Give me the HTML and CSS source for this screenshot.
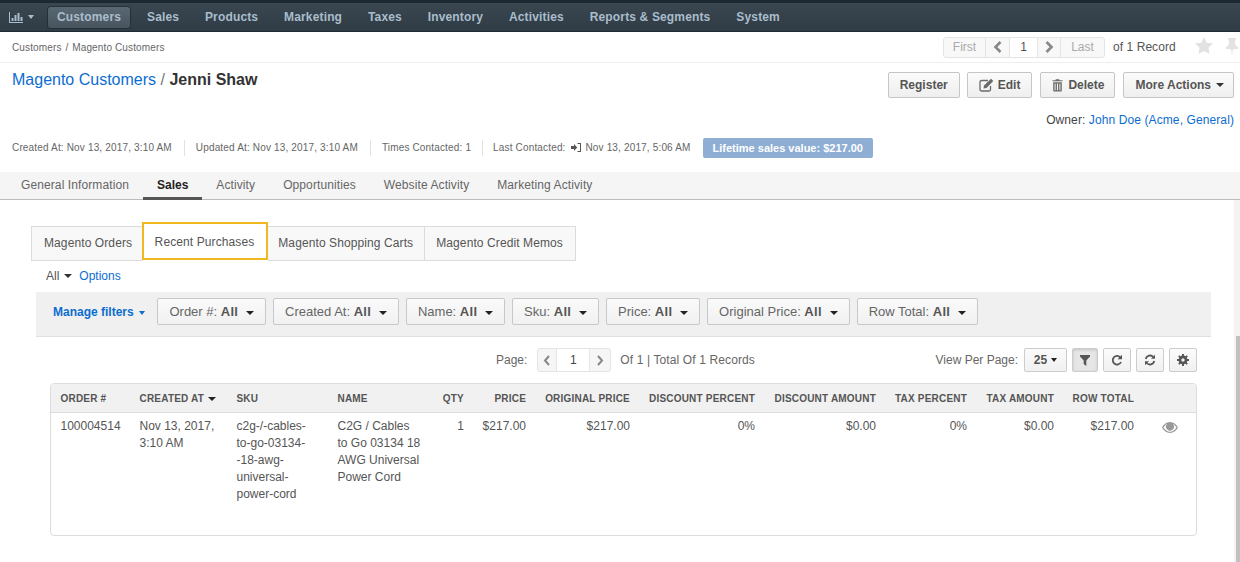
FILE: index.html
```html
<!DOCTYPE html>
<html lang="en">
<head>
<meta charset="utf-8">
<title>Jenni Shaw - Magento Customers</title>
<link rel="stylesheet" href="styles.css">
</head>
<body>
<div class="scrollbar"><div class="scrollbar-thumb"></div></div>
<header class="topnav">
  <div class="nav-logo">
    <svg class="nav-chart" width="14" height="11" viewBox="0 0 14 11"><path d="M0 0h1v10h13v1H0zM2.500 6h2v3h-2zM5.500 3h2v6h-2zM8.500 1h2v8h-2zM11.500 5h2v4h-2z" fill="#a9bdcb"/></svg>
    <span class="caret caret-nav"></span>
  </div>
  <nav class="nav-items">
    <a class="nav-item active">Customers</a>
    <a class="nav-item">Sales</a>
    <a class="nav-item">Products</a>
    <a class="nav-item">Marketing</a>
    <a class="nav-item">Taxes</a>
    <a class="nav-item">Inventory</a>
    <a class="nav-item">Activities</a>
    <a class="nav-item">Reports &amp; Segments</a>
    <a class="nav-item">System</a>
  </nav>
</header>

<div class="crumb-row">
  <div class="breadcrumb">Customers <span class="sep">/</span> Magento Customers</div>
  <div class="pager-area">
    <div class="rec-pager">
      <span class="rp-cell rp-first">First</span>
      <span class="rp-cell rp-prev"><svg width="10" height="12" viewBox="0 0 10 12"><path d="M7.500 1 L2.500 6 L7.500 11" fill="none" stroke="#888" stroke-width="2.600"/></svg></span>
      <span class="rp-cell rp-num">1</span>
      <span class="rp-cell rp-next"><svg width="10" height="12" viewBox="0 0 10 12"><path d="M2.500 1 L7.500 6 L2.500 11" fill="none" stroke="#888" stroke-width="2.600"/></svg></span>
      <span class="rp-cell rp-last">Last</span>
    </div>
    <span class="rec-count">of 1 Record</span>
    <svg class="star" width="18" height="17" viewBox="0 0 18 17"><path d="M9 0l2.700 5.700 6.300.8-4.600 4.300 1.200 6.200L9 14l-5.600 3 1.200-6.200L0 6.500l6.300-.8z" fill="#e2e2e2"/></svg>
    <svg class="pin" width="12" height="17" viewBox="0 0 12 17"><path d="M2 0h8v1.500H9v5l3 3v1.500H7l-1 6-1-6H0V9.500l3-3v-5H2z" fill="#e2e2e2"/></svg>
  </div>
</div>

<section class="title-row">
  <h1 class="page-title"><a class="link">Magento Customers</a> <span class="title-sep">/</span> <strong>Jenni Shaw</strong></h1>
  <div class="actions">
    <button class="btn btn-register">Register</button>
    <button class="btn"><svg class="btn-ico" width="16" height="14" viewBox="0 0 16 14"><path d="M11.500 8v3.500a1.500 1.500 0 0 1-1.500 1.500H2.500A1.500 1.500 0 0 1 1 11.500V4a1.500 1.500 0 0 1 1.500-1.500H9" fill="none" stroke="#6a6a6a" stroke-width="1.300"/><path d="M5 7.500L12 .8l2.300 2.300-6.800 6.900-3 .6z" fill="#6a6a6a"/></svg>Edit</button>
    <button class="btn btn-delete"><svg class="btn-ico trash" width="11" height="14" viewBox="0 0 12 14"><path d="M4 1.700V.6h4v1.100h3.500v1.300H.5V1.700zM1.300 4h9.400v9a1 1 0 0 1-1 1H2.300a1 1 0 0 1-1-1zm1.500 1.300v7.400h1.100V5.300zm2.600 0v7.400h1.200V5.300zm2.700 0v7.400h1.100V5.300z" fill="#6a6a6a" fill-rule="evenodd"/></svg>Delete</button>
    <button class="btn btn-more">More Actions<span class="caret caret-btn"></span></button>
  </div>
</section>

<div class="owner-row">Owner: <a class="link">John Doe (Acme, General)</a></div>

<div class="meta-row">
  <span class="meta">Created At: Nov 13, 2017, 3:10 AM</span>
  <span class="meta">Updated At: Nov 13, 2017, 3:10 AM</span>
  <span class="meta">Times Contacted: 1</span>
  <span class="meta">Last Contacted: <svg class="signin" width="10" height="9" viewBox="0 0 10 9"><path d="M0 3h3V1l3.200 3.500L3 8V6H0zM6.500 0H10v9H6.500V8H9V1H6.500z" fill="#555"/></svg> Nov 13, 2017, 5:06 AM</span>
  <span class="lifetime">Lifetime sales value: $217.00</span>
</div>

<div class="tabs">
  <a class="tab">General Information</a>
  <a class="tab current">Sales</a>
  <a class="tab">Activity</a>
  <a class="tab">Opportunities</a>
  <a class="tab">Website Activity</a>
  <a class="tab">Marketing Activity</a>
</div>

<main class="content">
  <div class="subtabs">
    <a class="subtab first">Magento Orders</a>
    <a class="subtab focus">Recent Purchases</a>
    <a class="subtab third">Magento Shopping Carts</a>
    <a class="subtab fourth">Magento Credit Memos</a>
  </div>

  <div class="all-row">
    <span class="all">All<span class="caret caret-all"></span></span>
    <a class="link">Options</a>
  </div>

  <div class="filter-bar">
    <a class="manage">Manage filters<span class="caret caret-blue"></span></a>
    <button class="fbtn">Order #: <b>All</b><span class="caret caret-f"></span></button>
    <button class="fbtn">Created At: <b>All</b><span class="caret caret-f"></span></button>
    <button class="fbtn">Name: <b>All</b><span class="caret caret-f"></span></button>
    <button class="fbtn">Sku: <b>All</b><span class="caret caret-f"></span></button>
    <button class="fbtn">Price: <b>All</b><span class="caret caret-f"></span></button>
    <button class="fbtn">Original Price: <b>All</b><span class="caret caret-f"></span></button>
    <button class="fbtn">Row Total: <b>All</b><span class="caret caret-f"></span></button>
  </div>

  <div class="grid-tools">
    <div class="page-ctl">
      <span>Page:</span>
      <div class="page-box">
        <span class="pb-arrow pb-prev"><svg width="8" height="11" viewBox="0 0 8 11"><path d="M6 1L2 5.500 6 10" fill="none" stroke="#888" stroke-width="2"/></svg></span>
        <span class="pb-num">1</span>
        <span class="pb-arrow pb-next"><svg width="8" height="11" viewBox="0 0 8 11"><path d="M2 1l4 4.500L2 10" fill="none" stroke="#888" stroke-width="2"/></svg></span>
      </div>
      <span class="page-total">Of 1 | Total Of 1 Records</span>
    </div>
    <div class="view-ctl">
      <span>View Per Page:</span>
      <button class="tbtn per">25<span class="caret caret-f"></span></button>
      <button class="tbtn icon pressed"><svg width="10" height="11" viewBox="0 0 10 11"><path d="M0 0h10v1.500L6.300 5.500V11L3.700 9V5.500L0 1.500z" fill="#555"/></svg></button>
      <button class="tbtn icon"><svg width="12" height="12" viewBox="0 0 12 12"><path d="M9.600 3.800A4.300 4.300 0 1 0 10 8" fill="none" stroke="#555" stroke-width="1.800"/><path d="M11 .8v4.400H6.600z" fill="#555"/></svg></button>
      <button class="tbtn icon"><svg width="12" height="12" viewBox="0 0 12 12"><path d="M1.700 5A4.400 4.400 0 0 1 9.300 3M10.300 7A4.400 4.400 0 0 1 2.700 9" fill="none" stroke="#555" stroke-width="1.800"/><path d="M11 .8v4H7zM1 11.200v-4h4z" fill="#555"/></svg></button>
      <button class="tbtn icon"><svg width="12" height="12" viewBox="0 0 12 12"><circle cx="6" cy="6" r="3.300" fill="none" stroke="#555" stroke-width="2.200"/><path d="M6 0v12M0 6h12M1.800 1.800l8.400 8.400M10.200 1.800l-8.400 8.400" stroke="#555" stroke-width="1.900"/><circle cx="6" cy="6" r="1.700" fill="#f2f2f2"/></svg></button>
    </div>
  </div>

  <div class="grid-wrap">
    <table class="grid">
      <colgroup>
        <col class="c1"><col class="c2"><col class="c3"><col class="c4"><col class="c5"><col class="c6"><col class="c7"><col class="c8"><col class="c9"><col class="c10"><col class="c11"><col class="c12"><col class="c13">
      </colgroup>
      <thead>
        <tr>
          <th>ORDER #</th>
          <th>CREATED AT<span class="caret caret-th"></span></th>
          <th>SKU</th>
          <th>NAME</th>
          <th class="r">QTY</th>
          <th class="r">PRICE</th>
          <th class="r">ORIGINAL PRICE</th>
          <th class="r">DISCOUNT PERCENT</th>
          <th class="r">DISCOUNT AMOUNT</th>
          <th class="r">TAX PERCENT</th>
          <th class="r">TAX AMOUNT</th>
          <th class="r">ROW TOTAL</th>
          <th></th>
        </tr>
      </thead>
      <tbody>
        <tr>
          <td>100004514</td>
          <td>Nov 13, 2017, 3:10 AM</td>
          <td>c2g-/-cables-to-go-03134--18-awg-universal-power-cord</td>
          <td>C2G / Cables to Go 03134 18 AWG Universal Power Cord</td>
          <td class="r">1</td>
          <td class="r">$217.00</td>
          <td class="r">$217.00</td>
          <td class="r">0%</td>
          <td class="r">$0.00</td>
          <td class="r">0%</td>
          <td class="r">$0.00</td>
          <td class="r">$217.00</td>
          <td class="eye-cell"><svg width="16" height="11" viewBox="0 0 16 11"><path d="M8 0C4.500 0 1.700 2.100 0 5.500 1.700 8.900 4.500 11 8 11s6.300-2.100 8-5.500C14.300 2.100 11.500 0 8 0zM1.500 5.500C2.400 3.900 3.600 2.700 5 2a4 4 0 1 0 6 0c1.400.7 2.600 1.900 3.500 3.500-1.600 2.500-3.800 4.300-6.500 4.300S3.100 8 1.500 5.500z" fill="#999" fill-rule="evenodd"/></svg></td>
        </tr>
      </tbody>
    </table>
  </div>
</main>
</body>
</html>
```
FILE: styles.css
```css
* { box-sizing: border-box; }
html, body { margin: 0; padding: 0; height: 562px; overflow: hidden; }
body { font-family: "Liberation Sans", Arial, sans-serif; font-size: 12px; color: #444; background: #fff; position: relative; }
a { text-decoration: none; }
.link { color: #0c6dcf; }
button { font-family: inherit; margin: 0; cursor: pointer; }

.scrollbar { position: absolute; top: 200px; right: 0; width: 6px; height: 362px; background: #f3f3f3; }
.scrollbar-thumb { position: absolute; top: 136px; right: 0; width: 4px; height: 226px; background: #c1c1c1; }

.caret { display: inline-block; width: 0; height: 0; border-left: 4px solid transparent; border-right: 4px solid transparent; border-top: 4px solid #333; vertical-align: middle; }

.topnav { height: 32px; background: linear-gradient(#3a4650, #2f3b45); border-top: 3px solid #1e2830; border-bottom: 1px solid #1f2932; display: flex; align-items: center; padding-left: 9px; }
.nav-logo { display: flex; align-items: center; width: 36px; gap: 5px; }
.caret-nav { border-top-color: #a9bdcb; border-left-width: 3.500px; border-right-width: 3.500px; }
.nav-items { display: flex; align-items: center; margin-left: 3px; }
.nav-item { color: #a9bdcb; font-weight: bold; font-size: 12px; letter-spacing: .15px; padding: 0 12.950px; line-height: 21px; height: 21px; white-space: nowrap; }
.nav-item.active { background: linear-gradient(#5a6873, #47545e); border-radius: 3px; box-shadow: 0 0 0 1px #252f37; padding: 0 9px; margin-right: 4px; }

.crumb-row { height: 31px; border-bottom: 1px solid #eee; display: flex; justify-content: space-between; align-items: center; padding: 0 2px 0 12px; }
.breadcrumb { font-size: 10px; letter-spacing: .13px; color: #666; }
.sep { margin: 0 1px; }
.pager-area { display: flex; align-items: center; }
.rec-pager { display: flex; height: 21px; border: 1px solid #e4e4e4; border-radius: 3px; background: #f8f8f8; }
.rp-cell { display: flex; align-items: center; justify-content: center; border-right: 1px solid #e4e4e4; color: #aaa; }
.rp-first { width: 42px; }
.rp-prev { width: 24px; }
.rp-num { width: 28px; background: #fff; color: #555; }
.rp-next { width: 23px; }
.rp-last { width: 43px; border-right: 0; }
.rec-count { margin-left: 8px; width: 82px; color: #555; letter-spacing: .06px; }
.star { margin: 0 13px 3px 0; }
.pin { margin-bottom: 2px; }

.title-row { height: 46px; display: flex; justify-content: space-between; padding: 7px 6px 0 12px; }
.page-title { margin: 0; font-size: 16px; font-weight: normal; line-height: 20px; }
.title-sep { color: #777; }
.page-title strong { color: #333; }
.actions { display: flex; gap: 8px; padding-top: 2px; }
.btn { height: 26px; padding: 0 11px; border: 1px solid #c6c6c6; border-radius: 2px; background: linear-gradient(#fbfbfb, #efefef); color: #555; font-weight: bold; font-size: 12px; display: flex; align-items: center; white-space: nowrap; }
.btn-register { margin-right: -1px; }
.btn-delete { padding: 0 10px 0 11px; }
.btn-more { padding: 0 9px 0 11px; }
.btn-ico { margin-right: 3px; }
.btn-ico.trash { margin-right: 5px; }
.caret-btn { margin-left: 5px; }

.owner-row { text-align: right; padding-right: 6px; height: 20px; line-height: 15px; color: #444; margin-top: 4px; letter-spacing: .1px; }

.meta-row { display: flex; align-items: center; height: 20px; padding-left: 12px; margin-top: 5px; font-size: 10px; letter-spacing: .16px; color: #666; }
.meta { padding-right: 12px; margin-right: 11px; border-right: 1px solid #e2e2e2; line-height: 16px; white-space: nowrap; }
.meta:nth-child(3) { padding-right: 11px; margin-right: 10px; }
.meta:nth-child(4) { border-right: 0; margin-right: 0; padding-right: 12px; }
.signin { margin: 0 2px; vertical-align: -1px; }
.lifetime { background: #8eaed4; color: #fff; font-weight: bold; font-size: 11px; letter-spacing: 0; height: 20px; line-height: 20px; padding: 0 10px; border-radius: 2px; white-space: nowrap; }

.tabs { display: flex; height: 28px; margin-top: 14px; background: #f5f5f5; border-bottom: 1px solid #bbb; padding-left: 7px; }
.tab { color: #666; line-height: 27px; padding: 0 14px; height: 28px; letter-spacing: .1px; white-space: nowrap; }
.tab.current { color: #222; font-weight: bold; letter-spacing: 0; border-bottom: 3px solid #555; }

.content { padding: 26px 29px 0 36px; }
.subtabs { display: flex; height: 35px; margin-left: -5px; }
.subtab { display: block; line-height: 33px; padding: 0 12px; border: 1px solid #dcdcdc; border-left: 0; background: #f8f8f8; color: #555; letter-spacing: .1px; white-space: nowrap; }
.subtab.first { border-left: 1px solid #dcdcdc; border-right: 0; padding: 0 11px 0 12px; }
.subtab.focus { background: #fff; border: 2px solid #f0b71f; height: 38px; margin: -4px 0 0 -1.500px; line-height: 36px; padding: 0 12px 0 11px; }
.subtab.third { padding: 0 11px 0 10px; }
.subtab.fourth { padding: 0 12px 0 11px; }

.all-row { height: 31px; display: flex; align-items: center; padding: 0 0 2px 10px; gap: 7px; color: #555; }
.caret-all { margin-left: 5px; }

.filter-bar { display: flex; align-items: flex-start; gap: 6.750px; height: 45px; background: #f0f0f0; border-bottom: 1px solid #e0e0e0; padding: 6px 0 0 17px; }
.manage { color: #0c6dcf; font-weight: bold; margin-right: 6px; line-height: 27px; padding-top: 1px; white-space: nowrap; }
.caret-blue { border-top-color: #0c6dcf; border-left-width: 3.500px; border-right-width: 3.500px; margin-left: 5px; }
.fbtn { height: 27px; padding: 0 11px; border: 1px solid #c8c8c8; border-radius: 2px; background: linear-gradient(#fafafa, #f1f1f1); color: #666; font-size: 13px; white-space: nowrap; }
.fbtn b { color: #555; letter-spacing: .3px; }
.caret-f { margin-left: 8px; border-top-color: #222; }

.grid-tools { display: flex; justify-content: space-between; align-items: center; height: 46px; padding: 0 14px 0 460px; color: #666; }
.page-ctl { display: flex; align-items: center; gap: 9px; }
.page-box { display: flex; height: 24px; margin-left: 1px; border: 1px solid #e4e4e4; border-radius: 3px; background: #f6f6f6; }
.page-total { letter-spacing: .12px; }
.pb-arrow { display: flex; align-items: center; justify-content: center; }
.pb-prev { width: 18px; }
.pb-next { width: 20px; }
.pb-num { width: 34px; background: #fff; text-align: center; line-height: 22px; color: #444; border-left: 1px solid #e4e4e4; border-right: 1px solid #e4e4e4; }
.view-ctl { display: flex; align-items: center; gap: 5px; }
.tbtn { height: 24px; border: 1px solid #ccc; border-radius: 2px; background: linear-gradient(#fbfbfb, #f0f0f0); display: flex; align-items: center; justify-content: center; padding: 0; }
.tbtn.per { width: 43px; margin-left: 1px; font-weight: bold; color: #555; font-size: 12px; }
.tbtn.per .caret-f { margin-left: 4px; border-left-width: 3px; border-right-width: 3px; }
.tbtn.icon { width: 28px; }
.tbtn.pressed { width: 26px; background: #e6e6e6; box-shadow: inset 0 1px 3px rgba(0,0,0,.15); }

.grid-wrap { margin: 0 14px; height: 153px; border: 1px solid #ddd; border-radius: 4px; overflow: hidden; }
.grid { border-collapse: collapse; table-layout: fixed; width: 1146px; color: #555; }
.grid th { height: 28px; padding: 1px 9px 0 9.500px; background: #f1f1f1; border-bottom: 1px solid #ddd; text-align: left; font-size: 10px; font-weight: bold; color: #555; letter-spacing: .2px; white-space: nowrap; }
.grid td { padding: 5px 9px 5px 9.500px; vertical-align: top; line-height: 17px; font-size: 12px; }
.grid .r { text-align: right; }
.caret-th { margin-left: 4px; border-top-color: #222; }
.eye-cell { text-align: center; padding-top: 9px !important; }
.eye-cell svg { display: block; margin: 0 auto; }
.c1 { width: 79px; } .c2 { width: 97px; } .c3 { width: 101px; } .c4 { width: 103px; } .c5 { width: 42px; } .c6 { width: 62px; } .c7 { width: 104px; } .c8 { width: 125px; } .c9 { width: 121px; } .c10 { width: 91px; } .c11 { width: 87px; } .c12 { width: 80px; } .c13 { width: 54px; }
```
